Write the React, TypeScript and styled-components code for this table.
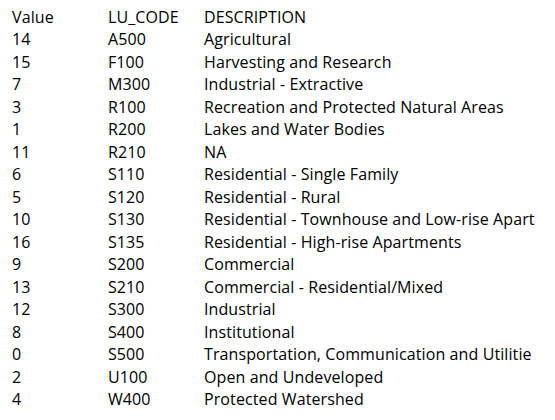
import React from "react";
import styled, { createGlobalStyle } from "styled-components";

const Global = createGlobalStyle`
  html, body { margin: 0; padding: 0; background: #ffffff; }
  body { font-family: "Open Sans", "Liberation Sans", sans-serif; }
`;

const Table = styled.div`
  display: flex;
  flex-direction: column;
  padding: 5.5px 0 0 12px;
  width: 525px;
  color: #000000;
  font-size: 16px;
  letter-spacing: 0.1px;
`;

const Row = styled.div`
  display: grid;
  grid-template-columns: 96px 96px 333px;
  height: 22.5px;
  line-height: 22.5px;
  white-space: nowrap;
`;

const Cell = styled.div``;

const rows: [string, string, string][] = [
  ["Value", "LU_CODE", "DESCRIPTION"],
  ["14", "A500", "Agricultural"],
  ["15", "F100", "Harvesting and Research"],
  ["7", "M300", "Industrial - Extractive"],
  ["3", "R100", "Recreation and Protected Natural Areas"],
  ["1", "R200", "Lakes and Water Bodies"],
  ["11", "R210", "NA"],
  ["6", "S110", "Residential - Single Family"],
  ["5", "S120", "Residential - Rural"],
  ["10", "S130", "Residential - Townhouse and Low-rise Apart"],
  ["16", "S135", "Residential - High-rise Apartments"],
  ["9", "S200", "Commercial"],
  ["13", "S210", "Commercial - Residential/Mixed"],
  ["12", "S300", "Industrial"],
  ["8", "S400", "Institutional"],
  ["0", "S500", "Transportation, Communication and Utilitie"],
  ["2", "U100", "Open and Undeveloped"],
  ["4", "W400", "Protected Watershed"],
];

export default function App() {
  return (
    <>
      <Global />
      <Table>
        {rows.map((r, i) => (
          <Row key={i}>
            <Cell>{r[0]}</Cell>
            <Cell>{r[1]}</Cell>
            <Cell>{r[2]}</Cell>
          </Row>
        ))}
      </Table>
    </>
  );
}
